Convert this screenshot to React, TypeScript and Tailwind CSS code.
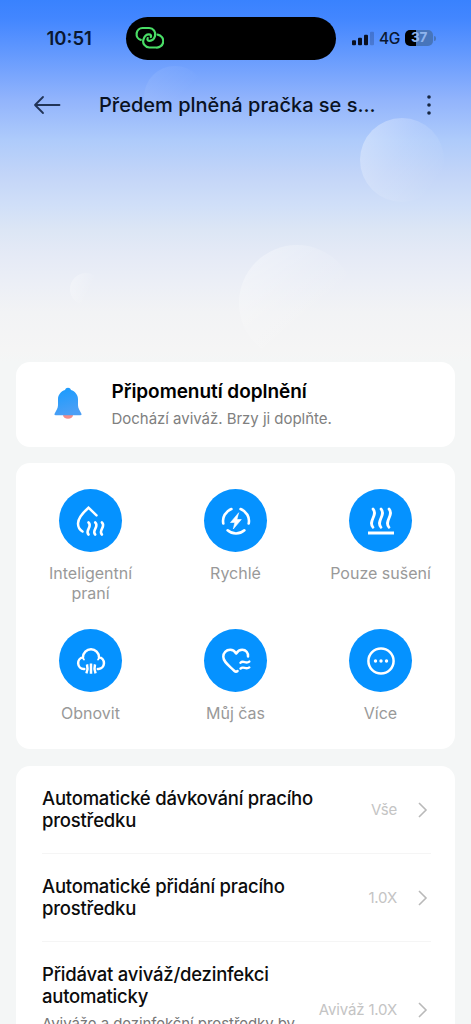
import type { ReactNode } from "react";

function StatusBar() {
  return (
    <div className="flex h-[76px] shrink-0 items-center text-[#0a1730]">
      <div className="ml-[46.500px] mt-px w-[79.500px] text-[18.500px] font-semibold tracking-[0px]">10:51</div>
      <div className="flex h-[43px] w-[210px] items-center rounded-full bg-black pl-[9px]">
        <svg width="29" height="24" viewBox="0 0 29 24" fill="none" stroke="#4ade66" strokeWidth="2.2" strokeLinecap="round">
          <path d="M5.800 13.900A6.100 6.100 0 0 1 7.500 2h6.500a6.200 6.200 0 0 1 6 8.200c-.9 2.800-2.900 4.600-5.300 4.600-2 0-2.700-1.200-2-2.700" />
          <path d="M22.600 8.700A6.300 6.300 0 0 1 21 21.500h-6.500a6.200 6.200 0 0 1-6-8.200c.9-2.800 2.900-4.900 5.300-4.900 2 0 2.700 1.200 2 2.700" />
        </svg>
      </div>
      <svg className="ml-4" width="22" height="15" viewBox="0 0 22 15" fill="#0a1020">
        <rect x="0" y="9.300" width="4" height="5" rx="1" />
        <rect x="6" y="6.800" width="4" height="7.500" rx="1" />
        <rect x="12" y="3.800" width="4" height="10.500" rx="1" />
        <rect x="18" y="0.800" width="4" height="13.500" rx="1" opacity="0.200" />
      </svg>
      <div className="ml-[5px] mt-px w-[26px] text-[15.500px] font-medium tracking-[-0.300px]">4G</div>
      <div className="flex h-[15.500px] w-[28px] items-center justify-center rounded-[5px] bg-[linear-gradient(90deg,#000_0_39%,#4775bb_39%)] text-[13.500px] font-bold leading-none tracking-[-0.300px] text-[#8fb4ee]">
        37
      </div>
      <div className="ml-px h-[5px] w-[1.500px] rounded-r bg-[#4775bb]" />
    </div>
  );
}

function NavBar() {
  return (
    <div className="relative flex h-[58px] shrink-0 items-center">
      <svg className="ml-[33px]" width="28" height="20" viewBox="0 0 28 20" fill="none" stroke="#213457" strokeWidth="1.800" strokeLinecap="round" strokeLinejoin="round">
        <path d="M10 2 2 10l8 8M2 10h24.500" />
      </svg>
      <h1 className="ml-[38px] w-[320px] whitespace-nowrap text-[20px] font-medium tracking-[0px] text-[#0a1222]">
        Předem plněná pračka se s...
      </h1>
      <svg className="ml-[7px]" width="6" height="22" viewBox="0 0 6 22" fill="#172640">
        <circle cx="3" cy="3" r="1.800" />
        <circle cx="3" cy="11" r="1.800" />
        <circle cx="3" cy="19" r="1.800" />
      </svg>
    </div>
  );
}

function Bubbles() {
  return (
    <>
      <div className="absolute left-[360px] top-[118px] size-[84px] rounded-full bg-[linear-gradient(125deg,rgba(255,255,255,0.380)_5%,rgba(255,255,255,0.150)_45%,rgba(255,255,255,0)_85%)]" />
      <div className="absolute left-[239px] top-[245px] size-[116px] rounded-full bg-[linear-gradient(135deg,rgba(255,255,255,0.380)_5%,rgba(255,255,255,0.120)_40%,rgba(255,255,255,0)_65%)]" />
      <div className="absolute left-[70px] top-[273px] size-[32px] rounded-full bg-[linear-gradient(115deg,rgba(255,255,255,0.320)_5%,rgba(255,255,255,0)_60%)]" />
      <div className="absolute left-[144px] top-[66px] size-[62px] rounded-full bg-[linear-gradient(135deg,rgba(255,255,255,0.080)_10%,rgba(255,255,255,0)_55%)]" />
    </>
  );
}

const modes: { label: string; icon: ReactNode }[] = [
  {
    label: "Inteligentní praní",
    icon: (
      <>
        <path d="M21.500 10.300 13.500 2.700C8 7.500 3 12.800 3 18.500c0 3.600 1.700 6.300 4.500 8" strokeLinejoin="miter" />
        <path d="M13.500 17.500c4.500 4.200-4 7.800 0 12M20.200 17.500c4.500 4.200-4 7.800 0 12M26.900 17.500c4.500 4.200-4 7.800 0 12" strokeWidth="2.600" />
      </>
    ),
  },
  {
    label: "Rychlé",
    icon: (
      <>
        <path d="M3.300 18.500A12.700 12.700 0 0 1 11.400 4M20.600 4A12.700 12.700 0 0 1 28.700 18.500M24.400 25.300A12.700 12.700 0 0 1 7.600 25.300" strokeWidth="2.600" />
        <path d="m18.500 8-8 9.500h4.300L13.300 24l8-9.500h-4.200z" fill="white" strokeWidth="0.600" />
      </>
    ),
  },
  {
    label: "Pouze sušení",
    icon: (
      <>
        <path d="M8 4c5.500 6-5.500 12.300 0 18.300M16 4c5.500 6-5.500 12.300 0 18.300M24 4c5.500 6-5.500 12.300 0 18.300" strokeWidth="2.700" />
        <path d="M3 28h26" strokeLinecap="butt" strokeWidth="3" />
      </>
    ),
  },
  {
    label: "Obnovit",
    icon: (
      <>
        <path d="M9.300 24H8.800A5.900 5.900 0 0 1 8 12.300 8 8 0 0 1 24 12.300 5.900 5.900 0 0 1 23.600 24h-.8" />
        <path d="M8 12.300c.1.900.4 1.600.9 2.200M24 12.300c-.1.900-.4 1.600-.9 2.200" strokeWidth="1.900" />
        <path d="M12 19.300c.9 3 .7 5.900-.6 9.100M20 19.300c-.9 3-.7 5.900.6 9.100M16 18.600v10.200" strokeWidth="2.500" strokeLinecap="butt" />
      </>
    ),
  },
  {
    label: "Můj čas",
    icon: (
      <>
        <path d="M28 11.500c.4-3.700-2-6.700-5.800-6.700-2.800 0-4.600 1.400-6 3.700-1.400-2.300-3.200-3.700-6-3.700C6 4.800 3.300 8 3.300 11.800c0 5.200 5.700 8.700 11.200 14.200 1 1 2 1 3 0" />
        <path d="M20.500 17.800c2.800-3.100 5.300 1.600 8.800-1.200M20.500 23.600c2.800-3.100 5.300 1.600 8.800-1.200" strokeWidth="2.400" />
      </>
    ),
  },
  {
    label: "Více",
    icon: (
      <>
        <circle cx="16" cy="16" r="12.600" />
        <g fill="white" stroke="none">
          <circle cx="10.500" cy="16" r="1.700" />
          <circle cx="16" cy="16" r="1.700" />
          <circle cx="21.500" cy="16" r="1.700" />
        </g>
      </>
    ),
  },
];

function SettingRow({ title, note, value, last }: { title: string; note?: string; value: string; last?: boolean }) {
  return (
    <div className={last ? "flex h-[136px] items-center" : "flex h-[88px] items-center border-b border-[#f5f5f5]"}>
      <div className={note ? "-mt-0.5 h-[92px] w-[273px]" : "-mt-0.5 w-[273px]"}>
        <div className="text-[18.500px] font-medium leading-[22px] tracking-[-0.220px] text-[#0c0c0c]">{title}</div>
        {note && <div className="mt-[6px] whitespace-nowrap text-[15px] leading-[21px] tracking-[-0.070px] text-[#777]">{note}</div>}
      </div>
      <div className="flex flex-1 items-center justify-end whitespace-nowrap text-[15px] tracking-[-0.150px] text-[#c4c4c4]">
        <span className="pt-px">{value}</span>
        <svg className="ml-5 mr-[3px]" width="11" height="16" viewBox="0 0 11 16" fill="none" stroke="#b9b9b9" strokeWidth="1.600">
          <path d="m2 1 7 7-7 7" />
        </svg>
      </div>
    </div>
  );
}

export default function App() {
  return (
    <div className="relative flex h-[1024px] w-[471px] flex-col overflow-hidden bg-[#f4f6f6] font-['Inter',sans-serif]">
      <header className="relative flex h-[362px] shrink-0 flex-col bg-[linear-gradient(180deg,#3982fe_0px,#4286ff_18px,#6097fe_50px,#92b4fc_100px,#aecbfb_140px,#c3d5f8_175px,#d0dff8_205px,#dce6f5_230px,#e5eaf6_255px,#eceff6_285px,#f2f3f5_312px,#f5f5f5_350px,#f4f6f6_362px)]">
        <Bubbles />
        <div className="relative flex flex-col">
          <StatusBar />
          <NavBar />
        </div>
      </header>

      <main className="flex flex-col gap-[17px] px-4">
        <section className="flex h-[85px] items-center rounded-[14px] bg-white">
          <svg className="-mt-0.5 ml-[38px]" width="28" height="33" viewBox="0 0 28 33">
            <defs>
              <linearGradient id="bell" x1="0" y1="0" x2="0.300" y2="1">
                <stop offset="0" stopColor="#159bff" />
                <stop offset="1" stopColor="#4b9ff5" />
              </linearGradient>
            </defs>
            <ellipse cx="14" cy="28" rx="5" ry="3.800" fill="#f58d89" />
            <path d="M14 .8c1.500 0 2.400.9 3 2.200 4 1.300 7 4.700 7 9.200v6c0 3.300 2 5.400 3.300 8.300.5 1.200.3 1.700-1 1.700H1.700c-1.300 0-1.500-.5-1-1.700C2 23.600 4 21.500 4 18.200v-6C4 7.700 7 4.300 11 3c.6-1.300 1.500-2.200 3-2.200Z" fill="url(#bell)" />
          </svg>
          <div className="-mt-px ml-[29.500px]">
            <h2 className="text-[19px] font-semibold leading-[26px] tracking-[-0.050px] text-black">Připomenutí doplnění</h2>
            <p className="mt-[3px] text-[15px] leading-[22px] tracking-[-0.030px] text-[#808080]">Dochází aviváž. Brzy ji doplňte.</p>
          </div>
        </section>

        <section className="-mt-px grid h-[286px] grid-cols-3 content-start gap-y-[26px] rounded-[14px] bg-white px-0.5 pt-[26px]">
          {modes.map((mode) => (
            <div key={mode.label} className="flex flex-col items-center">
              <div className="flex size-[63px] items-center justify-center rounded-full bg-[#0592ff]">
                <svg width="32" height="32" viewBox="0 0 32 32" fill="none" stroke="white" strokeWidth="2.500" strokeLinecap="round" strokeLinejoin="round">
                  {mode.icon}
                </svg>
              </div>
              <div className="mt-[11px] w-[110px] text-center text-[16px] leading-5 text-[#999]">{mode.label}</div>
            </div>
          ))}
        </section>

        <section className="flex flex-col rounded-t-[14px] bg-white pl-[26px] pr-6">
          <SettingRow title="Automatické dávkování pracího prostředku" value="Vše" />
          <SettingRow title="Automatické přidání pracího prostředku" value="1.0X" />
          <SettingRow title="Přidávat aviváž/dezinfekci automaticky" note="Aviváže a dezinfekční prostředky by" value="Aviváž 1.0X" last />
        </section>
      </main>
    </div>
  );
}
